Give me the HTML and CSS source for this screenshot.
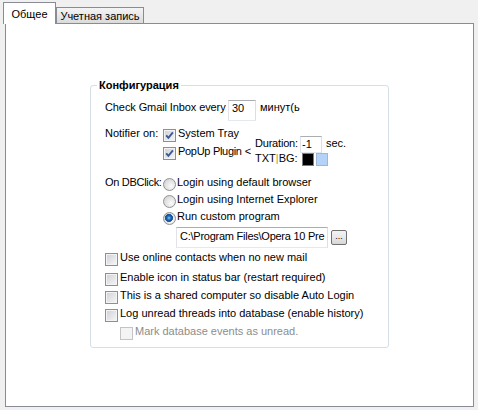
FILE: index.html
```html
<!DOCTYPE html>
<html lang="ru">

<head>
    <meta charset="UTF-8">
    <title>Настройки</title>
    <link rel="stylesheet" href="styles.css">
</head>

<body>
    <!-- вкладки -->
    <div class="tabs">
        <div class="tab tab-active">Общее</div>
        <div class="tab">Учетная запись</div>
    </div>
    <div class="panel">
        <fieldset class="group">
            <legend>Конфигурация</legend>
            <div class="group-body">
                <div class="row-gmail">
                    <span class="lbl-gmail">Check Gmail Inbox every</span>
                    <span class="edit edit-min">30</span>
                    <span class="unit">минут(ь</span>
                </div>
                <div class="row-notifier">
                    <span class="lbl">Notifier on:</span>
                    <div class="checks">
                        <div class="check"><span class="cb"><svg viewBox="0 0 11 11" width="11" height="11"><path d="M2.2 5.4 L4.4 7.9 L8.9 2.4" fill="none" stroke="#3c5897" stroke-width="1.9"/></svg></span>System Tray</div>
                        <div class="check"><span class="cb"><svg viewBox="0 0 11 11" width="11" height="11"><path d="M2.2 5.4 L4.4 7.9 L8.9 2.4" fill="none" stroke="#3c5897" stroke-width="1.9"/></svg></span><span class="tight">PopUp Plugin</span><span class="lt">&lt;</span></div>
                    </div>
                    <div class="popup-opts">
                        <div class="dur">
                            <span class="dur-lbl">Duration:</span>
                            <span class="edit edit-dur">-1</span>
                            <span class="sec">sec.</span>
                        </div>
                        <div class="colors">
                            <span class="colors-lbl">TXT<span class="bar">|</span>BG:</span>
                            <span class="swatch black"></span>
                            <span class="swatch blue"></span>
                        </div>
                    </div>
                </div>
                <div class="row-dbclick">
                    <span class="lbl tight">On DBClick:</span>
                    <div class="radios">
                        <div class="radio"><span class="rb"></span>Login using default browser</div>
                        <div class="radio"><span class="rb"></span>Login using Internet Explorer</div>
                        <div class="radio"><span class="rb on"></span>Run custom program</div>
                        <div class="path">
                            <span class="edit edit-path">C:\Program Files\Opera 10 Pre</span>
                            <span class="btn-browse">...</span>
                        </div>
                    </div>
                </div>
                <div class="options">
                    <div class="check first"><span class="cb"></span>Use online contacts when no new mail</div>
                    <div class="check"><span class="cb"></span>Enable icon in status bar (restart required)</div>
                    <div class="check"><span class="cb"></span>This is a shared computer so disable Auto Login</div>
                    <div class="check"><span class="cb"></span>Log unread threads into database (enable history)</div>
                    <div class="check sub disabled"><span class="cb"></span>Mark database events as unread.</div>
                </div>
            </div>
        </fieldset>
    </div>
</body>

</html>
```

FILE: styles.css
```css
* {
    margin: 0;
    padding: 0;
    box-sizing: border-box;
}

body {
    width: 478px;
    height: 410px;
    overflow: hidden;
    background: #f0f0f0;
    font: 11px "Liberation Sans", Arial, sans-serif;
    color: #000;
}

/* вкладки */
.tabs {
    display: flex;
    align-items: flex-end;
    height: 23px;
    padding-left: 3px;
}

.tab {
    width: 88px;
    height: 16px;
    padding-top: 2px;
    border: 1px solid #898c95;
    border-bottom: none;
    background: linear-gradient(#f4f4f4, #e8e8e8 50%, #dadada);
    line-height: 13px;
    text-align: center;
    white-space: nowrap;
}

.tab-active {
    position: relative;
    width: 53px;
    height: 22px;
    margin-bottom: -1px;
    padding-top: 5px;
    background: #fff;
}

.panel {
    width: 469px;
    height: 384px;
    margin-left: 5px;
    padding: 54px 0 0 84px;
    border: 1px solid #898c95;
    background: #fff;
}

/* группа */
.group {
    width: 299px;
    border: 1px solid #d5dfe5;
    border-radius: 3px;
    padding: 0;
}

.group legend {
    margin-left: 6px;
    padding: 0 2px;
    font-weight: bold;
    line-height: 14px;
}

.group-body {
    padding: 8px 0 4px 14px;
}

.lbl {
    flex: none;
    width: 58px;
    line-height: 13px;
    white-space: nowrap;
}

/* поля ввода */
.edit {
    display: block;
    flex: none;
    border: 1px solid;
    border-color: #abadb3 #dbdfe6 #e3e9ef #e2e3ea;
    background: #fff;
    line-height: 13px;
    white-space: nowrap;
    overflow: hidden;
}

.row-gmail {
    display: flex;
    align-items: flex-start;
    height: 21px;
}

.lbl-gmail {
    width: 123px;
    line-height: 14px;
    letter-spacing: -0.1px;
}

.edit-min {
    width: 28px;
    height: 21px;
    padding: 1px 0 0 3px;
}

.unit {
    margin-left: 4px;
    line-height: 14px;
    white-space: nowrap;
}

.row-notifier {
    display: flex;
    align-items: flex-start;
    margin-top: 6px;
}

.checks {
    flex: none;
    width: 92px;
}

.check {
    display: flex;
    align-items: flex-start;
    height: 18px;
    line-height: 13px;
    white-space: nowrap;
}

.cb {
    flex: none;
    display: block;
    width: 13px;
    height: 13px;
    margin: 2px 2px 0 0;
    border: 1px solid #8e8f8f;
    background: linear-gradient(135deg, #cdd0d5, #f7f7f7);
    box-shadow: inset 0 0 0 1px #f3f3f3;
}

.cb svg {
    display: block;
}

.tight {
    letter-spacing: -0.3px;
}

.lt {
    margin-left: 3px;
}

.popup-opts {
    margin-top: 9px;
}

.dur {
    display: flex;
    align-items: flex-start;
    height: 17px;
}

.dur-lbl {
    width: 45px;
    margin-top: 1px;
    line-height: 13px;
    letter-spacing: -0.2px;
}

.edit-dur {
    width: 22px;
    height: 17px;
    padding: 1px 0 0 1px;
}

.sec {
    margin: 1px 0 0 4px;
    line-height: 13px;
}

.colors {
    display: flex;
    align-items: flex-start;
    height: 13px;
}

.colors-lbl {
    width: 47px;
    line-height: 11px;
    white-space: nowrap;
}

.bar {
    color: #d38c2a;
}

.swatch {
    display: block;
    width: 12px;
    height: 13px;
    margin-right: 2px;
    border: 1px solid;
}

.black {
    background: #000;
    border-color: #7c7c7c;
}

.blue {
    background: #b4d3f7;
    border-color: #9cb7dc;
}

/* двойной клик */
.row-dbclick {
    display: flex;
    align-items: flex-start;
    margin-top: 10px;
}

.radio {
    display: flex;
    align-items: flex-start;
    height: 17px;
    line-height: 13px;
    white-space: nowrap;
}

.rb {
    flex: none;
    display: block;
    width: 13px;
    height: 13px;
    margin: 2px 1px 0 0;
    border: 1px solid #929292;
    border-radius: 50%;
    background: radial-gradient(circle at 65% 65%, #fbfbfb, #d3d3d3 85%);
}

.rb.on {
    background: radial-gradient(circle at 45% 45%, #8fd0f5 0, #2f7fc8 1.5px, #0f4a92 3.2px, #2c5e9e 3.8px, transparent 4.3px),
        radial-gradient(circle at 65% 65%, #fbfbfb, #d3d3d3 85%);
}

.path {
    display: flex;
    align-items: flex-start;
    margin-left: 13px;
}

.edit-path {
    width: 152px;
    height: 21px;
    padding: 2px 0 0 3px;
    letter-spacing: -0.25px;
}

.btn-browse {
    display: block;
    width: 16px;
    height: 15px;
    margin: 3px 0 0 3px;
    border: 1px solid #707070;
    border-radius: 2px;
    background: linear-gradient(#f3f3f3, #e8e8e8 50%, #d6d6d6);
    font-size: 9px;
    line-height: 10px;
    text-align: center;
    overflow: hidden;
}

/* флажки */
.options {
    margin-top: 3px;
}

.options .first {
    height: 20px;
}

.sub {
    margin-left: 15px;
}

.disabled {
    color: #8d8d8d;
}

.disabled .cb {
    border-color: #c4c4c4;
    background: #f4f4f4;
    box-shadow: none;
}
```
